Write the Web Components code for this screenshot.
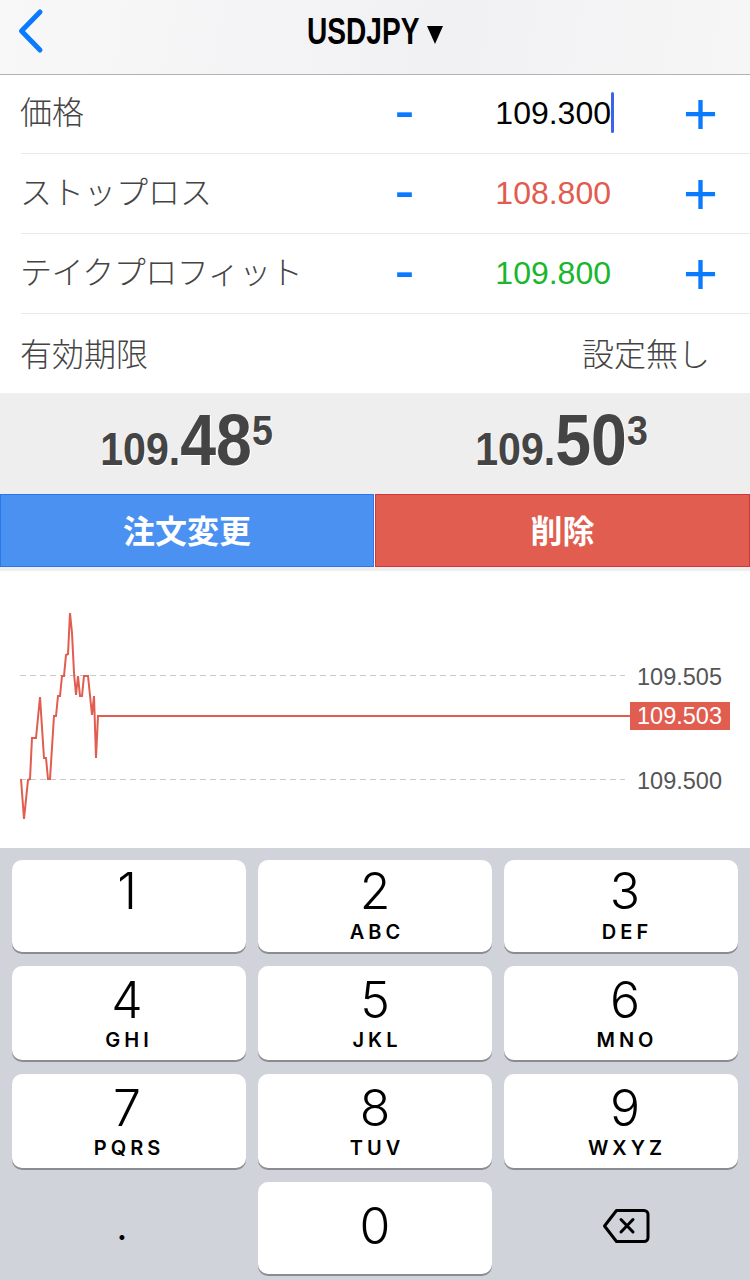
<!DOCTYPE html>
<html lang="ja">
<head>
<meta charset="utf-8">
<title>USDJPY</title>
<style>
  html, body { margin: 0; background: #fff; }
  body { width: 750px; height: 1280px; overflow: hidden; font-family: "Liberation Sans", "Noto Sans CJK JP", sans-serif; }
</style>
</head>
<body>
<order-header symbol="USDJPY"></order-header>
<order-row label="価格" value="109.300" stepper caret height="79" nudge="-8"></order-row>
<order-row label="ストップロス" value="108.800" color="#e35b4f" stepper></order-row>
<order-row label="テイクプロフィット" value="109.800" color="#19b62e" stepper tight></order-row>
<order-row label="有効期限" value="設定無し" height="79" nudge="-4" last></order-row>
<quote-panel>
  <price-quote head="109." big="48" tail="5"></price-quote>
  <price-quote head="109." big="50" tail="3"></price-quote>
  <action-button slot="actions" bg="#4a91f2" line="#2b78ee">注文変更</action-button>
  <action-button slot="actions" bg="#e05d50" line="#d2353b">削除</action-button>
</quote-panel>
<tick-chart></tick-chart>
<num-pad>
  <num-key digit="1" top="13" dx="-2"></num-key>
  <num-key digit="2" letters="ABC" top="13" gap="16"></num-key>
  <num-key digit="3" letters="DEF" top="13" gap="16" dx="4"></num-key>
  <num-key digit="4" letters="GHI" top="16" dx="-2"></num-key>
  <num-key digit="5" letters="JKL" top="16"></num-key>
  <num-key digit="6" letters="MNO" top="16" dx="4"></num-key>
  <num-key digit="7" letters="PQRS" top="16" dx="-2"></num-key>
  <num-key digit="8" letters="TUV" top="16"></num-key>
  <num-key digit="9" letters="WXYZ" top="16" dx="4"></num-key>
  <num-key digit="." top="26" dx="-7" flat></num-key>
  <num-key digit="0" top="26"></num-key>
  <num-key top="26" dx="5" flat backspace></num-key>
</num-pad>

<script>
class OrderHeader extends HTMLElement {
  connectedCallback() {
    this.attachShadow({ mode: "open" });
    this.shadowRoot.innerHTML = `
      <style>
        :host {
          display: flex; position: relative; box-sizing: border-box; height: 75px;
          align-items: flex-start; justify-content: center; padding-top: 14px;
          background: linear-gradient(100deg, #f8f8f9, #f1f1f3 60%, #f6f6f7);
          border-bottom: 1px solid #b2b2b2;
        }
        svg { position: absolute; left: 16px; top: 8px; }
        .title { display: flex; align-items: center; gap: 8px; color: #000; }
        .sym { display: inline-block; width: 112px; font: bold 36px/36px "Liberation Sans", sans-serif; white-space: nowrap; transform: scaleX(.78); transform-origin: left center; }
        .tri { width: 0; height: 0; border-left: 8px solid transparent; border-right: 8px solid transparent; border-top: 18px solid #000; margin-top: 6px; }
      </style>
      <svg width="30" height="46" viewBox="0 0 30 46"><path d="M24 4 L5.500 23 L24 42" fill="none" stroke="#0a7aff" stroke-width="5" stroke-linecap="round" stroke-linejoin="round"/></svg>
      <div class="title"><span class="sym">${this.getAttribute("symbol")}</span><span class="tri"></span></div>
    `;
  }
}

class OrderRow extends HTMLElement {
  connectedCallback() {
    this.attachShadow({ mode: "open" });
    const stepper = this.hasAttribute("stepper");
    const color = this.getAttribute("color") || "#000";
    const value = this.getAttribute("value");
    const nudge = this.getAttribute("nudge") || -7;
    const spacing = this.hasAttribute("tight") ? "-.5px" : "0";
    const caret = this.hasAttribute("caret") ? `<i class="caret"></i>` : "";
    const line = this.hasAttribute("last") ? "none" : "1px solid #e9e9e9";
    const body = stepper
      ? `<span class="minus">-</span><span class="value" style="color:${color}">${value}${caret}</span><span></span><span class="plus">+</span>`
      : `<span class="plain">${value}</span>`;
    this.shadowRoot.innerHTML = `
      <style>
        :host {
          display: grid; box-sizing: border-box; height: ${this.getAttribute("height") || 80}px; margin-left: 21px;
          grid-template-columns: 353px 60px 177px 60px 60px;
          align-items: center;
          border-bottom: ${line};
        }
        .label { margin-left: -1px; margin-top: ${nudge}px; font: 300 32px/1 "Noto Sans CJK JP", sans-serif; letter-spacing: ${spacing}; color: #444; white-space: nowrap; }
        .minus { text-align: center; font: 60px/1 "Liberation Sans", sans-serif; color: #0a7aff; margin-top: -8px; margin-left: 1px; }
        .plus { text-align: center; font: 60px/1 "Liberation Sans", sans-serif; color: #0a7aff; margin-left: -1px; }
        .value { position: relative; text-align: right; font: 32px/1 "Liberation Sans", sans-serif; margin-top: -2px; }
        .caret { position: absolute; right: -3px; top: -5px; width: 3px; height: 41px; background: #3f62e8; border-radius: 2px; }
        .plain { grid-column: 2 / -1; text-align: right; margin-right: 21px; margin-top: ${nudge}px; font: 300 32px/1 "Noto Sans CJK JP", sans-serif; color: #444; }
      </style>
      <span class="label">${this.getAttribute("label")}</span>${body}
    `;
  }
}

class QuotePanel extends HTMLElement {
  connectedCallback() {
    this.attachShadow({ mode: "open" });
    this.shadowRoot.innerHTML = `
      <style>
        :host { display: block; background: #eeeeee; height: 178px; }
        .quotes { display: flex; height: 101px; }
        .actions { display: grid; grid-template-columns: 374px 375px; gap: 1px; background: #fff; height: 73px; }
      </style>
      <div class="quotes"><slot></slot></div>
      <div class="actions"><slot name="actions"></slot></div>
    `;
  }
}

class PriceQuote extends HTMLElement {
  connectedCallback() {
    this.attachShadow({ mode: "open" });
    this.shadowRoot.innerHTML = `
      <style>
        :host { flex: 1; display: flex; justify-content: center; align-items: flex-start; padding-right: 2px; }
        .num {
          display: inline-block; margin-top: 6px; color: #444; font: bold 46px/82px "Liberation Sans", sans-serif;
          white-space: nowrap; transform: scaleX(.895); text-shadow: 1px 1px 0 #fff;
        }
        .big { font-size: 72px; }
        sup { font-size: 42px; line-height: 0; vertical-align: 20px; font-weight: bold; }
      </style>
      <span class="num">${this.getAttribute("head")}<span class="big">${this.getAttribute("big")}</span><sup>${this.getAttribute("tail")}</sup></span>
    `;
  }
}

class ActionButton extends HTMLElement {
  connectedCallback() {
    this.attachShadow({ mode: "open" });
    this.shadowRoot.innerHTML = `
      <style>
        :host {
          display: flex; align-items: center; justify-content: center; box-sizing: border-box;
          background: ${this.getAttribute("bg")}; border: 1px solid ${this.getAttribute("line")};
          color: #fff; font: 700 32px/1 "Noto Sans CJK JP", sans-serif; padding-bottom: 4px;
        }
      </style>
      <slot></slot>
    `;
  }
}

class TickChart extends HTMLElement {
  connectedCallback() {
    this.attachShadow({ mode: "open" });
    const pts = "21,779 24,819 28,780 30,779 32,738 36,738 40,697 44,758 46,758 48,779 50,779 54,716 56,716 58,696 60,696 62,676 64,676 66,655 68,654 70,613 72,633 74,673 76,695 78,676 80,696 82,696 84,676 88,676 92,715 94,696 96,758 98,716 630,716";
    this.shadowRoot.innerHTML = `
      <style>
        :host { display: block; position: relative; height: 277px; background: #fff; }
        svg { display: block; }
        span { position: absolute; left: 637px; font: 23.500px/28px "Liberation Sans", sans-serif; color: #555; }
        .now { left: 630px; width: 100px; box-sizing: border-box; padding-left: 7px; background: #e05d50; color: #fff; }
      </style>
      <svg width="750" height="277" viewBox="0 571 750 277">
        <path d="M20 675.500H625M20 779.500H625" stroke="#c9c9c9" stroke-width="1" stroke-dasharray="6 4" fill="none"/>
        <polyline points="${pts}" fill="none" stroke="#e05d50" stroke-width="2"/>
      </svg>
      <span style="top:92px">109.505</span>
      <span class="now" style="top:131px">109.503</span>
      <span style="top:196px">109.500</span>
    `;
  }
}

class NumPad extends HTMLElement {
  connectedCallback() {
    this.attachShadow({ mode: "open" });
    this.shadowRoot.innerHTML = `
      <style>
        :host {
          display: grid; box-sizing: border-box; height: 432px; padding: 12px 12px 0;
          grid-template-columns: repeat(3, 234px); grid-template-rows: 92px 94px 94px 92px;
          gap: 14px 12px; background: #d1d3da;
        }
      </style>
      <slot></slot>
    `;
  }
}

class NumKey extends HTMLElement {
  connectedCallback() {
    this.attachShadow({ mode: "open" });
    const flat = this.hasAttribute("flat");
    const digit = this.getAttribute("digit") || "";
    const letters = this.getAttribute("letters") || "";
    const dx = this.getAttribute("dx") || 0;
    const icon = `<svg width="48" height="36" viewBox="0 0 48 36">
      <path d="M14.500 2.500H42a4 4 0 0 1 4 4v23a4 4 0 0 1-4 4H14.500L2.500 18Z" fill="none" stroke="#000" stroke-width="3" stroke-linejoin="round"/>
      <path d="M19 11.500L31 24M31 11.500L19 24" fill="none" stroke="#000" stroke-width="3" stroke-linecap="round"/>
    </svg>`;
    const inner = this.hasAttribute("backspace")
      ? icon
      : `<span class="digit">${digit}</span>${letters ? `<span class="letters">${letters}</span>` : ""}`;
    this.shadowRoot.innerHTML = `
      <style>
        :host {
          display: flex; flex-direction: column; align-items: center; box-sizing: border-box;
          padding-top: ${this.getAttribute("top")}px; border-radius: 10px;
          background: ${flat ? "transparent" : "#fff"};
          box-shadow: ${flat ? "none" : "0 2px 0 #8b8c91"};
        }
        .digit, .letters, svg { transform: translateX(${dx}px); }
        .digit { font: 300 50px/36px Inter, sans-serif; color: #000; ${digit === "." ? "font-size:34px;font-weight:500;margin-top:2px;" : ""} }
        .letters { margin-top: ${this.getAttribute("gap") || 15}px; padding-left: 4px; font: 600 20px/14px Inter, sans-serif; letter-spacing: 4px; color: #000; }
      </style>
      ${inner}
    `;
  }
}

customElements.define("order-header", OrderHeader);
customElements.define("order-row", OrderRow);
customElements.define("quote-panel", QuotePanel);
customElements.define("price-quote", PriceQuote);
customElements.define("action-button", ActionButton);
customElements.define("tick-chart", TickChart);
customElements.define("num-pad", NumPad);
customElements.define("num-key", NumKey);
</script>
</body>
</html>
